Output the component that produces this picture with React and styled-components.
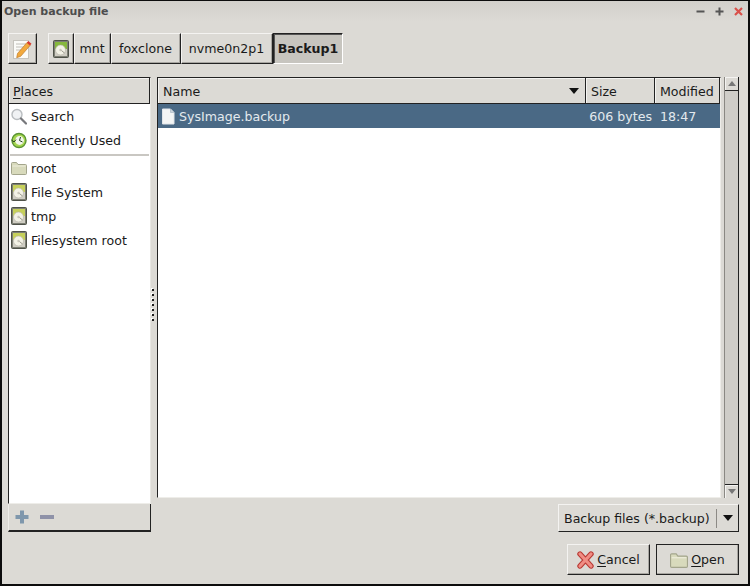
import styled, { createGlobalStyle } from 'styled-components';

const GlobalStyle = createGlobalStyle`
  html, body { margin: 0; padding: 0; background: #dcdad5; }
  * { box-sizing: border-box; }
`;

const Window = styled.div`
  width: 750px;
  height: 586px;
  display: flex;
  flex-direction: column;
  background: #dcdad5;
  border: 2px solid #0c0c0c;
  border-top-width: 1px;
  font-family: 'DejaVu Sans', sans-serif;
  font-size: 12.6px;
  color: #1a1a1a;
  overflow: hidden;
`;

const TitleBar = styled.div`
  height: 20px;
  flex: none;
  display: flex;
  align-items: center;
  justify-content: space-between;
  padding: 0 3px 0 2px;
  background: linear-gradient(#d2d0cb, #dcdad5);
  font-size: 11px;
  font-weight: bold;
  color: #4d4d4d;
`;

const WinButtons = styled.div`
  display: flex;
  gap: 6px;
`;

const Body = styled.div`
  flex: 1;
  display: flex;
  flex-direction: column;
  padding: 12px 9px 9px 6px;
  min-height: 0;
`;

const Toolbar = styled.div`
  height: 31px;
  flex: none;
  display: flex;
  gap: 11px;
`;

const PathBar = styled.div`
  display: flex;
`;

const RaisedButton = styled.div`
  height: 31px;
  display: flex;
  align-items: center;
  justify-content: center;
  width: ${(p) => p.$width}px;
  padding-right: ${(p) => (p.$active ? 0 : 1)}px;
  background: ${(p) => (p.$active ? '#c7c5bf' : '#dcdad5')};
  border: 1px solid;
  border-color: ${(p) =>
    p.$active ? '#222 #fff #fff #222' : '#f4f3f1 #222 #222 #f4f3f1'};
  font-weight: ${(p) => (p.$active ? 'bold' : 'normal')};
  box-shadow: ${(p) =>
    p.$active ? 'inset 1px 1px 0 #555' : 'inset -1px -1px 0 #a8a6a1'};
`;

const Main = styled.div`
  flex: 1;
  display: flex;
  margin-top: 13px;
  min-height: 0;
`;

const Sidebar = styled.div`
  width: 143px;
  flex: none;
  display: flex;
  flex-direction: column;
`;

const SidePane = styled.div`
  height: 427px;
  display: flex;
  flex-direction: column;
  background: #fff;
  border: 1px solid #222;
  border-right-color: #e8e7e3;
  border-bottom-color: #eeede9;
`;

const ColumnHead = styled.div`
  height: 26px;
  flex: ${(p) => (p.$grow ? 1 : 'none')};
  width: ${(p) => (p.$width ? `${p.$width}px` : 'auto')};
  display: flex;
  align-items: center;
  justify-content: space-between;
  padding: 1px ${(p) => (p.$grow ? 6 : 4)}px 0 ${(p) => p.$pad || 4}px;
  background: #dcdad5;
  border-right: 1px solid #222;
  border-bottom: 1px solid #222;
  box-shadow: inset 1px 1px 0 #f4f3f1;
`;

const PlaceList = styled.div`
  display: flex;
  flex-direction: column;
`;

const Place = styled.div`
  height: 24px;
  display: flex;
  align-items: center;
  gap: 4px;
  padding-left: 2px;
`;

const PlaceSeparator = styled.div`
  height: 2px;
  margin: 2px 1px 0 1px;
  background: #c9c7c2;
`;

const SideFooter = styled.div`
  height: 28px;
  display: flex;
  align-items: center;
  gap: 9px;
  padding: 0 0 0 5px;
  border-right: 1px solid #222;
  border-bottom: 2px solid #222;
  border-left: 1px solid #eeede9;
`;

const Handle = styled.div`
  width: 6px;
  flex: none;
  display: flex;
  flex-direction: column;
  justify-content: center;
  align-items: center;
  gap: 3px;
  padding-right: 3px;
`;

const Dot = styled.span`
  width: 2px;
  height: 2px;
  background: #1c1c1c;
  box-shadow: -1px -1px 0 #fff;
`;

const Content = styled.div`
  flex: 1;
  min-width: 0;
  display: flex;
  flex-direction: column;
`;

const ListRow = styled.div`
  height: 421px;
  flex: none;
  display: flex;
  gap: 3px;
`;

const FileList = styled.div`
  flex: 1;
  display: flex;
  flex-direction: column;
  background: #fff;
  border: 1px solid #222;
  border-right-color: #eeede9;
  border-bottom-color: #eeede9;
`;

const HeadRow = styled.div`
  display: flex;
  flex: none;
`;

const SelectedRow = styled.div`
  height: 24px;
  display: flex;
  align-items: center;
  background: #4a6985;
  color: #e3e9ee;
`;

const NameCell = styled.div`
  flex: 1;
  display: flex;
  align-items: center;
  gap: 3px;
  padding-left: 2px;
`;

const SizeCell = styled.div`
  width: 69px;
  padding-right: 3px;
  text-align: right;
  white-space: nowrap;
`;

const TimeCell = styled.div`
  width: 65px;
  padding-left: 5px;
`;

const Scrollbar = styled.div`
  width: 15px;
  flex: none;
  display: flex;
  flex-direction: column;
  justify-content: space-between;
  background: #cfcdc8;
  border-right: 1px solid #222;
  border-left: 1px solid #8a8883;
`;

const ScrollEnd = styled.div`
  height: 14px;
  display: flex;
  align-items: center;
  justify-content: center;
  background: #dcdad5;
  box-shadow: inset 1px 1px 0 #f4f3f1;
  border-${(p) => (p.$top ? 'bottom' : 'top')}: 1px solid #222;
`;

const FilterRow = styled.div`
  display: flex;
  justify-content: flex-end;
  margin-top: 6px;
`;

const Combo = styled.div`
  width: 181px;
  height: 28px;
  display: flex;
  align-items: center;
  background: #dcdad5;
  border: 1px solid;
  border-color: #f4f3f1 #222 #222 #f4f3f1;
`;

const ComboLabel = styled.div`
  flex: 1;
  padding-left: 5px;
  white-space: nowrap;
`;

const ComboArrow = styled.div`
  width: 22px;
  height: 19px;
  display: flex;
  align-items: center;
  justify-content: center;
  border-left: 1px solid #8c8a85;
`;

const Actions = styled.div`
  flex: none;
  display: flex;
  justify-content: flex-end;
  gap: 6px;
  margin-top: 12px;
`;

const ActionButton = styled.div`
  width: 83px;
  height: 31px;
  display: flex;
  align-items: center;
  justify-content: center;
  gap: 3px;
  border: 1px solid;
  border-color: #f4f3f1 #222 #222 #f4f3f1;
  box-shadow: inset -1px -1px 0 #a8a6a1;
  outline: ${(p) => (p.$default ? '1px solid #222' : 'none')};
  outline-offset: -1px;
`;

const Key = styled.span`
  text-decoration: underline;
  text-underline-offset: 2px;
`;

const WinIcon = ({ kind }) => (
  <svg width="13" height="13" viewBox="0 0 13 13">
    {kind === 'min' && <path d="M2.500 6.500h8" stroke="#555" strokeWidth="2" />}
    {kind === 'max' && <path d="M2.500 6.500h8M6.500 2.500v8" stroke="#555" strokeWidth="2" />}
    {kind === 'close' && <path d="M3 3l7 7M10 3l-7 7" stroke="#d9504a" strokeWidth="2.200" />}
  </svg>
);

const EditIcon = () => (
  <svg width="22" height="24" viewBox="0 0 22 24">
    <rect x="2.500" y="3.500" width="15" height="18" fill="#fbfbf8" stroke="#c6c4be" />
    <path d="M5 7h10M5 10h7M5 13h5" stroke="#c0beb8" />
    <path d="M6.500 16.500L16 5.500l3.200 2.800-9.500 11-4 1.400z" fill="#f2a93c" stroke="#bd7a2c" strokeWidth=".7" />
    <path d="M15.800 5.700l1.500-1.800 3.200 2.800-1.500 1.800z" fill="#d8392e" />
  </svg>
);

const DiskIcon = ({ bright }) => (
  <svg width="16" height="18" viewBox="0 0 16 18">
    <rect x=".5" y=".5" width="15" height="17" rx="1" fill="#7d7f74" stroke="#4f5249" />
    <rect x="2" y="2" width="12" height="14" fill={bright ? '#86b83c' : '#c6d05a'} />
    <rect x="2" y="9" width="12" height="7" fill="#cfcdc3" />
    <circle cx="7.500" cy="10" r="5" fill="#f3f2e6" stroke="#b4b2a6" strokeWidth=".6" />
    <circle cx="7.500" cy="10" r="1.200" fill="#c8c6ba" />
    <path d="M8.500 10.600l3 2.400" stroke="#99978c" />
  </svg>
);

const SearchIcon = () => (
  <svg width="16" height="17" viewBox="0 0 16 17">
    <circle cx="6" cy="6.500" r="5" fill="#f0f2f4" stroke="#b9bdc0" strokeWidth="1.400" />
    <path d="M10 10.500l5 5" stroke="#77787c" strokeWidth="2.200" strokeLinecap="round" />
  </svg>
);

const ClockIcon = () => (
  <svg width="16" height="17" viewBox="0 0 16 17">
    <circle cx="8" cy="8.500" r="7" fill="#a5d64f" stroke="#5b9433" strokeWidth="1.400" />
    <circle cx="8.500" cy="8.500" r="4.400" fill="#f4f6ee" />
    <path d="M9.500 5l-1 3.500 3 1.500M.5 8L3 10l2-2.400" stroke="#24431a" strokeWidth="1" fill="none" />
  </svg>
);

const FolderIcon = ({ size = 16 }) => (
  <svg width={size} height={size} viewBox="0 0 16 16">
    <path d="M.5 3.500a1 1 0 0 1 1-1h4l1.500 2h7.500a1 1 0 0 1 1 1v8a1 1 0 0 1-1 1h-13a1 1 0 0 1-1-1z" fill="#d8dabc" stroke="#a3a58c" />
    <path d="M1.500 6h13" stroke="#eeeedd" />
  </svg>
);

const FileIcon = () => (
  <svg width="16" height="17" viewBox="0 0 16 17">
    <path d="M2.500 1h8l3.500 3.500V16h-11.500z" fill="#f4f5f5" stroke="#e1e5e9" />
    <path d="M10.500 1v3.500H14" fill="#c9d2da" stroke="#b9c4ce" />
  </svg>
);

const PlusIcon = () => (
  <svg width="16" height="16" viewBox="0 0 16 16">
    <path d="M8 1.500v13M1.500 8h13" stroke="#7f97ac" strokeWidth="4" />
  </svg>
);

const MinusIcon = () => (
  <svg width="16" height="16" viewBox="0 0 16 16">
    <path d="M1 8h14" stroke="#8f92a8" strokeWidth="4" />
  </svg>
);

const CancelIcon = () => (
  <svg width="17" height="18" viewBox="0 0 17 18">
    <path d="M3 3l11 12M14 3L3 15" stroke="#b93a34" strokeWidth="5.400" strokeLinecap="round" />
    <path d="M3 3l11 12M14 3L3 15" stroke="#f08d84" strokeWidth="3.200" strokeLinecap="round" />
  </svg>
);

const Triangle = ({ up, color = '#111', w = 10, h = 6 }) => (
  <svg width={w} height={h} viewBox="0 0 10 6">
    <path d={up ? 'M0 6h10L5 0z' : 'M0 0h10L5 6z'} fill={color} />
  </svg>
);

const places = [
  { label: 'root', icon: <FolderIcon /> },
  { label: 'File System', icon: <DiskIcon /> },
  { label: 'tmp', icon: <DiskIcon /> },
  { label: 'Filesystem root', icon: <DiskIcon /> },
];

export default function App() {
  return (
    <>
      <GlobalStyle />
      <Window>
        <TitleBar>
          <span>Open backup file</span>
          <WinButtons>
            <WinIcon kind="min" />
            <WinIcon kind="max" />
            <WinIcon kind="close" />
          </WinButtons>
        </TitleBar>
        <Body>
          <Toolbar>
            <RaisedButton $width={29}><EditIcon /></RaisedButton>
            <PathBar>
              <RaisedButton $width={26}><DiskIcon bright /></RaisedButton>
              <RaisedButton $width={37}>mnt</RaisedButton>
              <RaisedButton $width={70}>foxclone</RaisedButton>
              <RaisedButton $width={92}>nvme0n2p1</RaisedButton>
              <RaisedButton $width={70} $active>Backup1</RaisedButton>
            </PathBar>
          </Toolbar>
          <Main>
            <Sidebar>
              <SidePane>
                <ColumnHead><span><Key>P</Key>laces</span></ColumnHead>
                <PlaceList>
                  <Place><SearchIcon />Search</Place>
                  <Place><ClockIcon />Recently Used</Place>
                  <PlaceSeparator />
                  {places.map((p) => (
                    <Place key={p.label}>{p.icon}{p.label}</Place>
                  ))}
                </PlaceList>
              </SidePane>
              <SideFooter>
                <PlusIcon />
                <MinusIcon />
              </SideFooter>
            </Sidebar>
            <Handle>
              {[0, 1, 2, 3, 4, 5, 6].map((i) => <Dot key={i} />)}
            </Handle>
            <Content>
              <ListRow>
                <FileList>
                  <HeadRow>
                    <ColumnHead $grow $pad={5}>
                      <span>Name</span>
                      <Triangle />
                    </ColumnHead>
                    <ColumnHead $width={69} $pad={5}>Size</ColumnHead>
                    <ColumnHead $width={65} $pad={5}>Modified</ColumnHead>
                  </HeadRow>
                  <SelectedRow>
                    <NameCell><FileIcon />SysImage.backup</NameCell>
                    <SizeCell>606 bytes</SizeCell>
                    <TimeCell>18:47</TimeCell>
                  </SelectedRow>
                </FileList>
                <Scrollbar>
                  <ScrollEnd $top><Triangle up color="#777" w={8} h={5} /></ScrollEnd>
                  <ScrollEnd><Triangle color="#777" w={8} h={5} /></ScrollEnd>
                </Scrollbar>
              </ListRow>
              <FilterRow>
                <Combo>
                  <ComboLabel>Backup files (*.backup)</ComboLabel>
                  <ComboArrow><Triangle /></ComboArrow>
                </Combo>
              </FilterRow>
            </Content>
          </Main>
          <Actions>
            <ActionButton>
              <CancelIcon />
              <span><Key>C</Key>ancel</span>
            </ActionButton>
            <ActionButton $default>
              <FolderIcon size={18} />
              <span><Key>O</Key>pen</span>
            </ActionButton>
          </Actions>
        </Body>
      </Window>
    </>
  );
}
